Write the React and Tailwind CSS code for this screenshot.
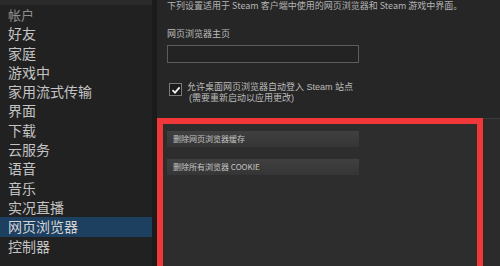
import React from "react";

const NAV_ITEMS = [
  "好友",
  "家庭",
  "游戏中",
  "家用流式传输",
  "界面",
  "下载",
  "云服务",
  "语音",
  "音乐",
  "实况直播",
  "网页浏览器",
  "控制器",
];

const ACTIVE = "网页浏览器";

function CheckBox() {
  return (
    <div className="w-[13px] h-[13px] border border-[#7a7a7a] bg-[#1b1b1b] flex items-center justify-center shrink-0">
      <svg width="10" height="10" viewBox="0 0 10 10">
        <path
          d="M1.5 5.2 L4 7.6 L8.6 2.4"
          fill="none"
          stroke="#f2f2f2"
          strokeWidth="1.8"
        />
      </svg>
    </div>
  );
}

function ActionButton({ children }) {
  return (
    <button className="w-[192px] h-[16px] pl-[6px] text-left text-[8px] leading-[16px] text-[#c4c4c4] bg-gradient-to-b from-[#404040] to-[#353535]">
      {children}
    </button>
  );
}

export default function App() {
  return (
    <div
      className="flex w-[500px] h-[266px] overflow-hidden bg-[#262626]"
      style={{ fontFamily: '"Noto Sans CJK SC", "Liberation Sans", sans-serif' }}
    >
      {/* sidebar */}
      <div className="w-[152px] shrink-0 flex flex-col bg-[#212121]">
        <div className="h-[5px] bg-[#2a2a2a]" />
        <div className="h-[19.3px] pl-[8px] text-[13px] leading-[19.3px] text-[#8e8e8e]">
          帐户
        </div>
        {NAV_ITEMS.map((item) => (
          <div
            key={item}
            className={
              item === ACTIVE
                ? "h-[19.3px] pl-[8px] text-[14px] leading-[19.3px] text-[#d4d4d4] bg-[#1d3f60]"
                : "h-[19.3px] pl-[8px] text-[14px] leading-[19.3px] text-[#c4c4c4]"
            }
          >
            {item}
          </div>
        ))}
      </div>

      <div className="w-[5px] shrink-0 bg-[#1b1b1b]" />

      {/* settings */}
      <div className="flex-1 flex flex-col">
        <div className="h-[118px] shrink-0 pl-[10px] text-[#bdbdbd]">
          <div className="text-[9px] leading-[12px] text-[#b4b4b4] whitespace-nowrap">
            下列设置适用于 Steam 客户端中使用的网页浏览器和 Steam 游戏中界面。
          </div>
          <div className="mt-[16px] text-[9px] leading-[12px]">网页浏览器主页</div>
          <div className="mt-[5px] w-[192px] h-[18px] border border-[#5c5c5c] bg-[#232323]" />
          <div className="mt-[20px] ml-[2px] flex gap-[5px]">
            <CheckBox />
            <div className="-mt-[1px] font-['Liberation_Sans','Noto_Sans_CJK_SC',sans-serif] text-[9px] leading-[10.5px] whitespace-nowrap">
              <div>允许桌面网页浏览器自动登入 Steam 站点</div>
              <div className="pl-[2px]">(需要重新启动以应用更改)</div>
            </div>
          </div>
        </div>

        <div className="flex-1 flex">
          <div className="w-[326px] shrink-0 border-[6px] border-b-0 border-[#f13737] bg-[#2d2d2d] pl-[4px] pt-[7px] flex flex-col gap-[12px]">
            <ActionButton>删除网页浏览器缓存</ActionButton>
            <ActionButton>删除所有浏览器 COOKIE</ActionButton>
          </div>
          <div className="flex-1 border-t border-[#3a3a3a] bg-[#2b2b2b]" />
        </div>
      </div>
    </div>
  );
}
